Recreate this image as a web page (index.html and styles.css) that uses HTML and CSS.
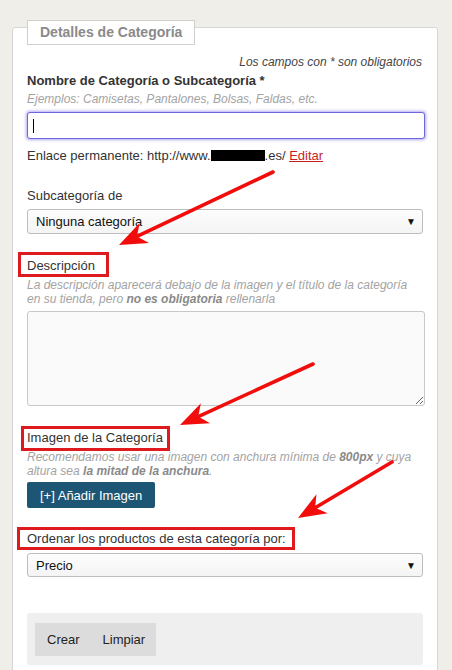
FILE: index.html
```html
<!DOCTYPE html>
<html lang="es">
<head>
<meta charset="utf-8">
<title>Detalles de Categoría</title>
<link rel="stylesheet" href="styles.css">
</head>
<body>
<div class="page">
  <div class="panel">
    <div class="legend">Detalles de Categoría</div>
    <p class="required-note">Los campos con * son obligatorios</p>

    <div class="field-title">Nombre de Categoría o Subcategoría *</div>
    <p class="hint hint-tight">Ejemplos: Camisetas, Pantalones, Bolsas, Faldas, etc.</p>
    <div class="text-input focused"><span class="caret"></span></div>
    <p class="permalink">Enlace permanente: http://www.<span class="redacted"></span>.es/ <a class="edit-link" href="#">Editar</a></p>

    <div class="label label-sub">Subcategoría de</div>
    <div class="select"><span>Ninguna categoría</span><span class="select-arrow">▼</span></div>

    <div class="label label-section">Descripción</div>
    <p class="hint">
      <span class="line">La descripción aparecerá debajo de la imagen y el título de la categoría</span>
      <span class="line">en su tienda, pero <b>no es obligatoria</b> rellenarla</span>
    </p>
    <textarea class="textarea"></textarea>

    <div class="label label-section">Imagen de la Categoría</div>
    <p class="hint">
      <span class="line">Recomendamos usar una imagen con anchura mínima de <b>800px</b> y cuya</span>
      <span class="line">altura sea <b>la mitad de la anchura</b>.</span>
    </p>
    <button class="primary-btn" type="button">[+] Añadir Imagen</button>

    <div class="label label-order">Ordenar los productos de esta categoría por:</div>
    <div class="select select-order"><span>Precio</span><span class="select-arrow">▼</span></div>

    <div class="actions">
      <div class="btn-group">
        <button class="action-btn" type="button">Crear</button>
        <button class="action-btn" type="button">Limpiar</button>
      </div>
    </div>
  </div>
</div>

<svg class="annotations" width="452" height="670" viewBox="0 0 452 670" aria-hidden="true">
  <g fill="none" stroke="#de1a1f" stroke-width="3">
    <rect x="19.5" y="253.5" width="88" height="22"/>
    <rect x="22.5" y="427.5" width="146" height="22"/>
    <rect x="18.5" y="528.5" width="275" height="20"/>
  </g>
  <g stroke="#f20d0d" stroke-width="3.6" stroke-linecap="round">
    <line x1="273" y1="172" x2="137" y2="236.4"/>
    <line x1="313" y1="364" x2="198.2" y2="416.6"/>
    <line x1="392" y1="462" x2="315.2" y2="507.8"/>
  </g>
  <g fill="#f20d0d">
    <polygon points="119,245 149,243 137,236.4 139.6,223"/>
    <polygon points="180,425 210.1,423.3 198.2,416.6 200.9,403.3"/>
    <polygon points="298,518 327.7,513.2 315.2,507.8 316.4,494.2"/>
  </g>
</svg>
</body>
</html>
```

FILE: styles.css
```css
* {
  box-sizing: border-box;
}

html, body {
  margin: 0;
  padding: 0;
}

body {
  position: relative;
  width: 452px;
  height: 670px;
  overflow: hidden;
  background: #efeee9;
  font-family: "Liberation Sans", Arial, sans-serif;
  font-size: 13px;
  color: #333;
}

.page {
  padding: 27px 14px 0 12px;
}

.panel {
  background: #fff;
  border: 1px solid #d6d6d6;
  border-radius: 3px 3px 0 0;
  padding: 0 14px 40px 14px;
  min-height: 700px;
}

.legend {
  display: block;
  width: max-content;
  margin-top: -8px;
  height: 25px;
  line-height: 23px;
  padding: 0 12px;
  border: 1px solid #cfcfcf;
  background: #fff;
  font-weight: bold;
  font-size: 14px;
  color: #8a8a8a;
}

p {
  margin: 0;
}

.required-note {
  margin-top: 10px;
  text-align: right;
  font-style: italic;
  font-size: 12px;
  line-height: 14px;
  color: #444;
  padding-right: 1px;
}

.field-title {
  margin-top: 4px;
  font-weight: bold;
  line-height: 15px;
  color: #333;
}

.hint {
  margin-top: 5px;
  font-style: italic;
  font-size: 12px;
  line-height: 14px;
  color: #a3a3a3;
}

.hint .line {
  display: block;
  white-space: nowrap;
}

.hint b {
  color: #8a8a8a;
}

.hint-tight {
  margin-top: 4px;
}

.text-input {
  margin-top: 6px;
  height: 27px;
  width: 398px;
  border: 1px solid #6f66dc;
  border-radius: 3px;
  background: #fff;
  display: flex;
  align-items: center;
  padding-left: 5px;
}

.text-input.focused {
  box-shadow: 0 0 3px 1px rgba(110, 100, 230, 0.55);
}

.caret {
  display: block;
  width: 1px;
  height: 14px;
  background: #000;
}

.permalink {
  margin-top: 9px;
  line-height: 15px;
  color: #333;
}

.redacted {
  display: inline-block;
  width: 54px;
  height: 11px;
  background: #000;
  vertical-align: -1px;
}

.edit-link {
  color: #c81e1e;
  text-decoration: underline;
}

.label {
  line-height: 15px;
  color: #333;
}

.label-sub {
  margin-top: 25px;
}

.label-section {
  margin-top: 24px;
}

.label-order {
  margin-top: 23px;
}

.select {
  margin-top: 6px;
  height: 25px;
  width: 396px;
  border: 1px solid #bdbdbd;
  border-radius: 3px;
  background: linear-gradient(#fdfdfd, #f4f4f4);
  display: flex;
  align-items: center;
  justify-content: space-between;
  padding: 0 6px 0 8px;
  color: #111;
}

.select-order {
  margin-top: 7px;
  height: 24px;
}

.select-arrow {
  font-size: 10px;
  color: #111;
}

.textarea {
  display: block;
  margin: 5px 0 0 0;
  width: 398px;
  height: 95px;
  border: 1px solid #c8c8c8;
  border-radius: 3px;
  background: #fafafa;
  font: inherit;
  padding: 4px;
}

.primary-btn {
  display: block;
  margin-top: 4px;
  height: 26px;
  padding: 0 13px;
  border: none;
  border-radius: 2px;
  background: #1d5675;
  color: #fff;
  font-family: inherit;
  font-size: 13px;
}

.actions {
  margin-top: 36px;
  width: 396px;
  height: 52px;
  background: #efefef;
  border-radius: 3px;
  padding: 10px 8px;
}

.btn-group {
  display: inline-flex;
  background: #dcdcdc;
  height: 33px;
}

.action-btn {
  border: none;
  background: transparent;
  font-family: inherit;
  font-size: 13px;
  color: #222;
  padding: 0 11px 0 12px;
}

.annotations {
  position: absolute;
  left: 0;
  top: 0;
  pointer-events: none;
}
```
